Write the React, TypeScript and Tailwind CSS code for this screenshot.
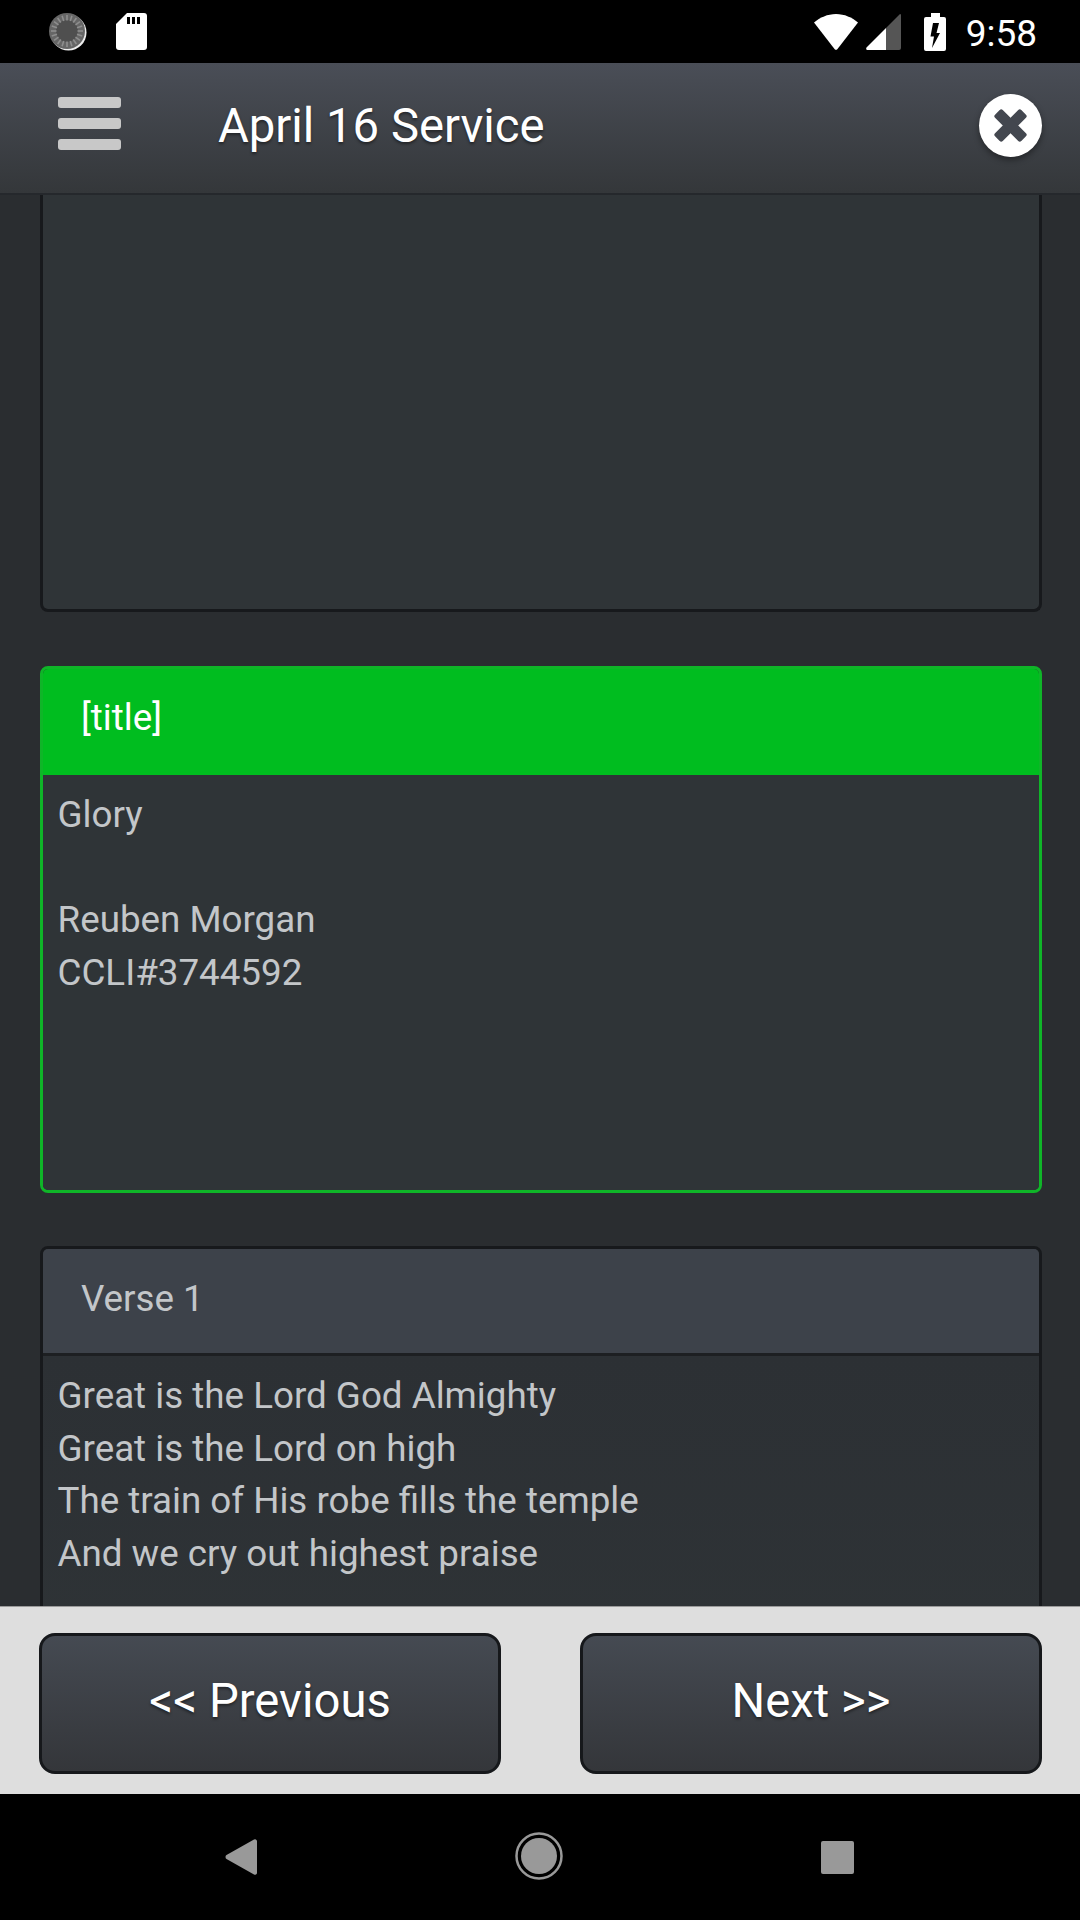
const lines1 = ["Glory", "\u00a0", "Reuben Morgan", "CCLI#3744592"];
const lines2 = [
  "Great is the Lord God Almighty",
  "Great is the Lord on high",
  "The train of His robe fills the temple",
  "And we cry out highest praise",
];

function Spinner() {
  const ticks = Array.from({ length: 20 }, (_, i) => i * 18);
  return (
    <svg width="40" height="40" viewBox="0 0 40 40">
      <circle cx="20.500" cy="20.500" r="18" fill="#ececec" />
      <circle cx="19" cy="19" r="18" fill="#666" />
      <circle cx="19" cy="19" r="11" fill="#4f4f4f" />
      {ticks.map((a) => (
        <rect key={a} x="18.200" y="3" width="1.600" height="5.500" fill="#8e8e8e" transform={`rotate(${a} 19 19)`} />
      ))}
    </svg>
  );
}

function StatusBar() {
  return (
    <div className="h-[63px] shrink-0 bg-black flex items-center pl-[48px] pr-[43px]">
      <Spinner />
      <svg className="ml-[28px]" width="31" height="37" viewBox="0 0 31 37">
        <path d="M11 0H28a3 3 0 0 1 3 3V34a3 3 0 0 1-3 3H3a3 3 0 0 1-3-3V11Z" fill="#fff" />
        <rect x="11" y="4" width="3" height="7" fill="#000" />
        <rect x="16" y="4" width="3" height="7" fill="#000" />
        <rect x="21" y="4" width="3" height="7" fill="#000" />
      </svg>
      <div className="flex-1" />
      <svg width="44" height="36" viewBox="0 0 44 36">
        <path d="M0 8.500C6 3.500 13.500 0 22 0s16 3.500 22 8.500L23.500 35a2 2 0 0 1-3 0Z" fill="#fff" />
      </svg>
      <svg className="ml-[8px]" width="35" height="36" viewBox="0 0 35 36">
        <path d="M34 0a1 1 0 0 1 1 1V34a2 2 0 0 1-2 2H20V14Z" fill="#555" />
        <path d="M20 14V36H2c-2 0-2.500-1.500-1-3Z" fill="#fff" />
      </svg>
      <svg className="ml-[23px]" width="22" height="38" viewBox="0 0 22 38">
        <path
          fillRule="evenodd"
          d="M7 0H16V4H20a2 2 0 0 1 2 2V36a2 2 0 0 1-2 2H2a2 2 0 0 1-2-2V6a2 2 0 0 1 2-2H7ZM9 10H15L12.500 20H16L8 35 10 23.500H6.500Z"
          fill="#fff"
        />
      </svg>
      <span className="ml-[20px] pt-[4px] text-[37px] leading-none text-white font-['Roboto',sans-serif]">9:58</span>
    </div>
  );
}

function TopBar() {
  return (
    <div className="h-[132px] shrink-0 bg-gradient-to-b from-[#4a4e57] to-[#34373a] border-b-2 border-[#25282c] flex items-center pl-[58px] pr-[38px] pb-[6px] relative z-10">
      <div className="w-[63px] mb-[4px] flex flex-col gap-[10px]">
        <div className="h-[11px] rounded-[3px] bg-[#c8c8c8]" />
        <div className="h-[11px] rounded-[3px] bg-[#c8c8c8]" />
        <div className="h-[11px] rounded-[3px] bg-[#c8c8c8]" />
      </div>
      <div className="ml-[97px] mt-[3px] flex-1 text-[47.25px] leading-none text-white [text-shadow:0_2px_3px_rgba(0,0,0,0.45)]">
        April 16 Service
      </div>
      <div className="w-[63px] h-[63px] rounded-full bg-white flex items-center justify-center shadow-[0_3px_6px_rgba(0,0,0,0.4)]">
        <svg width="35" height="35" viewBox="0 0 32 32">
          <rect x="11" y="-1" width="10" height="34" rx="2" fill="#43474f" transform="rotate(45 16 16)" />
          <rect x="11" y="-1" width="10" height="34" rx="2" fill="#43474f" transform="rotate(-45 16 16)" />
        </svg>
      </div>
    </div>
  );
}

function Card({ title, lines, active, bodyClass }: { title: string; lines: string[]; active?: boolean; bodyClass: string }) {
  return (
    <div className={active ? "rounded-[8px] border-[3px] border-[#0fb528] overflow-hidden" : "rounded-[8px] border-[3px] border-[#17191c] overflow-hidden"}>
      <div
        className={
          active
            ? "h-[106px] bg-[#00bd1f] text-white pl-[38px] pt-[23px] text-[36.75px] leading-[52px]"
            : "h-[107px] bg-[#3d424a] text-[#c3c6c9] border-b-[3px] border-[#1d1f22] pl-[38px] pt-[24px] text-[36.75px] leading-[52px]"
        }
      >
        {title}
      </div>
      <div className={bodyClass}>
        {lines.map((l, i) => (
          <div key={i}>{l}</div>
        ))}
      </div>
    </div>
  );
}

function NavButton({ label }: { label: string }) {
  return (
    <button className="w-[462px] h-[141px] rounded-[16px] border-[3px] border-[#16181b] bg-gradient-to-b from-[#454a52] to-[#34363a] text-white text-[47.25px] pb-[4px] [text-shadow:0_2px_3px_rgba(0,0,0,0.45)]">
      {label}
    </button>
  );
}

export default function App() {
  return (
    <div className="w-[1080px] h-[1920px] flex flex-col overflow-hidden font-['Roboto',sans-serif]">
      <StatusBar />
      <TopBar />
      <div className="h-[1411px] shrink-0 overflow-hidden bg-[#2a2d30] pl-[40px] pr-[38px] flex flex-col">
        <div className="h-[417px] shrink-0 rounded-b-[8px] border-[3px] border-t-0 border-[#17191c] bg-[#2f3437]" />
        <div className="h-[527px] shrink-0 mt-[54px] rounded-[8px]">
          <Card
            title="[title]"
            lines={lines1}
            active
            bodyClass="h-[415px] px-[14.500px] pt-[14px] text-[36.75px] leading-[52.5px] text-[#c3c6c9] bg-[#2f3437]"
          />
        </div>
        <div className="h-[500px] shrink-0 mt-[53px] rounded-[8px]">
          <Card
            title="Verse 1"
            lines={lines2}
            bodyClass="h-[400px] px-[14.500px] pt-[14px] text-[36.75px] leading-[52.5px] text-[#c3c6c9] bg-gradient-to-b from-[#2c3034] to-[#2f3437]"
          />
        </div>
      </div>
      <div className="h-[188px] shrink-0 bg-[#dedede] border-t border-[#9a9a9a] flex justify-between items-start pl-[39px] pr-[38px] pt-[26px]">
        <NavButton label="<< Previous" />
        <NavButton label="Next >>" />
      </div>
      <div className="flex-1 bg-black relative">
        <svg className="absolute left-[225px] top-[44px]" width="32" height="38" viewBox="0 0 32 38">
          <path d="M29 1.500a2 2 0 0 1 3 1.500V35a2 2 0 0 1-3 1.500L1.500 21a2.500 2.500 0 0 1 0-4Z" fill="#999" />
        </svg>
        <svg className="absolute left-[515px] top-[38px]" width="48" height="48" viewBox="0 0 48 48">
          <circle cx="24" cy="24" r="22.500" fill="none" stroke="#999" strokeWidth="2.500" />
          <circle cx="24" cy="24" r="18" fill="#999" />
        </svg>
        <div className="absolute left-[821px] top-[47px] w-[33px] h-[33px] rounded-[2px] bg-[#999]" />
      </div>
    </div>
  );
}
